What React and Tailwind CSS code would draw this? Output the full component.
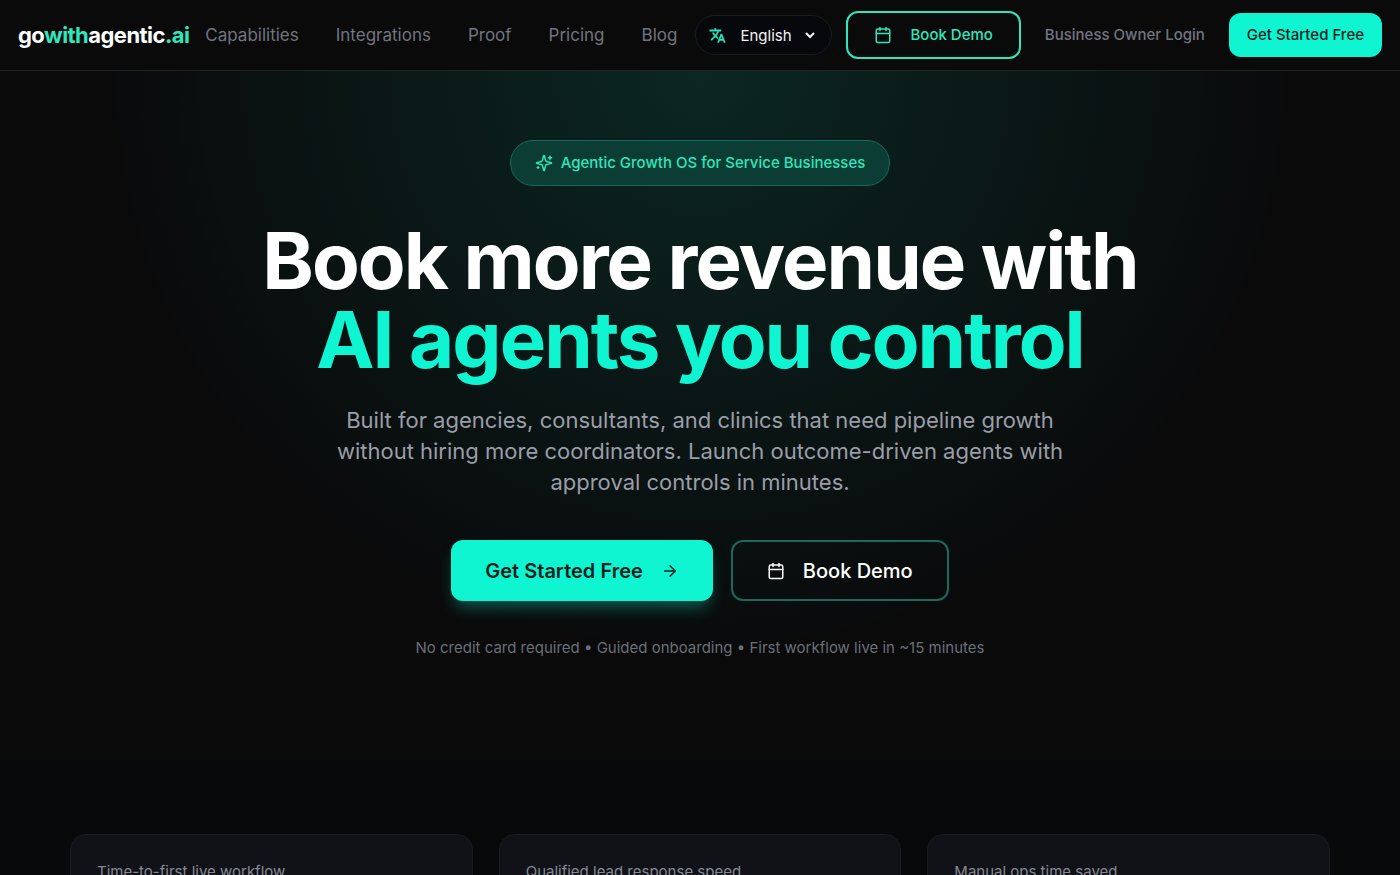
import { ArrowRight, Calendar } from "lucide-react";

const NAV_LINKS = ["Capabilities", "Integrations", "Proof", "Pricing", "Blog"];

const STATS = [
  "Time-to-first live workflow",
  "Qualified lead response speed",
  "Manual ops time saved",
];

function TranslateIcon({ className }) {
  return (
    <svg viewBox="0 0 24 24" fill="currentColor" aria-hidden="true" className={className}>
      <path
        stroke="currentColor"
        strokeWidth="0.6"
        d="m12.87 15.07-2.54-2.51.03-.03A17.52 17.52 0 0 0 14.07 6H17V4h-7V2H8v2H1v1.99h11.17C11.5 7.92 10.44 9.75 9 11.35 8.07 10.32 7.3 9.19 6.69 8h-2c.73 1.63 1.73 3.17 2.98 4.56l-5.09 5.02L4 19l5-5 3.11 3.11.76-2.04zM18.5 10h-2L12 22h2l1.12-3h4.75L21 22h2l-4.5-12zm-2.62 7 1.62-4.33L19.12 17h-3.24z"
      />
    </svg>
  );
}

function SparklesIcon({ className }) {
  return (
    <svg
      viewBox="0 0 24 24"
      fill="none"
      stroke="currentColor"
      strokeWidth="2"
      strokeLinecap="round"
      strokeLinejoin="round"
      aria-hidden="true"
      className={className}
    >
      <path d="M9.937 15.5A2 2 0 0 0 8.5 14.063l-6.135-1.582a.5.5 0 0 1 0-.962L8.5 9.936A2 2 0 0 0 9.937 8.5l1.582-6.135a.5.5 0 0 1 .963 0L14.063 8.5A2 2 0 0 0 15.5 9.937l6.135 1.581a.5.5 0 0 1 0 .964L15.5 14.063a2 2 0 0 0-1.437 1.437l-1.582 6.135a.5.5 0 0 1-.963 0z" />
      <path d="M20 3v4M22 5h-4M4 17v2M5 18H3" />
    </svg>
  );
}

function Navbar() {
  return (
    <header className="sticky top-0 z-40 border-b border-[#212326] bg-[#0a0a0b]">
      <div className="flex h-[70px] items-center justify-between px-[18px] whitespace-nowrap">
        <div className="flex items-center gap-4">
          <a href="#" className="text-[22px] font-bold tracking-tight text-white">
            go<span className="text-[#2fe6bd]">with</span>agentic
            <span className="text-[#2fe6bd]">.ai</span>
          </a>
          <nav className="flex items-center gap-[37px] text-[17px] leading-7 text-[#71757f]">
            {NAV_LINKS.map((link) => (
              <a key={link} href="#">
                {link}
              </a>
            ))}
          </nav>
        </div>
        <div className="flex items-center">
          <div className="flex h-10 items-center rounded-full border border-[#1b1c20] bg-[#07080b] px-[13px]">
            <TranslateIcon className="size-[17px] text-[#2fe6bd]" />
            <select
              aria-label="Language"
              className="ml-[10px] w-[82px] bg-transparent text-[15px] text-gray-100"
            >
              <option>English</option>
            </select>
          </div>
          <button className="ml-[14px] flex h-12 items-center gap-[18px] rounded-xl border-2 border-[#2fe6bd] px-[26px] text-[15px] font-medium text-[#2fe6bd]">
            <Calendar size={18} strokeWidth={2} />
            Book Demo
          </button>
          <a href="#" className="ml-6 text-[15px] font-medium text-[#71757f]">
            Business Owner Login
          </a>
          <button className="ml-6 h-11 rounded-xl bg-[#0ff5d2] px-[18px] text-[15px] font-medium text-[#0a1f1c]">
            Get Started Free
          </button>
        </div>
      </div>
    </header>
  );
}

function Hero() {
  return (
    <section className="flex flex-col items-center bg-[radial-gradient(ellipse_at_top,rgba(15,245,210,0.12),transparent_60%)] px-6 pt-[69px] pb-[100px] text-center">
      <div className="flex h-[46px] items-center gap-2 rounded-full border border-[#196a5a] bg-[#0b3d34] px-6 text-[15px] font-medium text-[#2fe6bd]">
        <SparklesIcon className="size-[18px]" />
        Agentic Growth OS for Service Businesses
      </div>
      <h1 className="mt-[35px] text-[78px] leading-[79px] font-bold tracking-tight text-white">
        Book more revenue with
        <span className="block text-[#0ff5d2]">AI agents you control</span>
      </h1>
      <p className="mt-[26px] max-w-[740px] text-[22px] leading-[31px] text-[#9a9ea8]">
        Built for agencies, consultants, and clinics that need pipeline growth without hiring more
        coordinators. Launch outcome-driven agents with approval controls in minutes.
      </p>
      <div className="mt-[42px] flex gap-[18px]">
        <button className="flex h-[61px] items-center gap-[18px] rounded-xl bg-[#0ff5d2] px-[34px] text-xl font-semibold text-[#0a1f1c] shadow-[0_10px_16px_-4px_rgba(15,245,210,0.35)]">
          Get Started Free
          <ArrowRight size={18} />
        </button>
        <button className="flex h-[61px] items-center gap-[18px] rounded-xl border-2 border-[#196a5d] px-[34px] text-xl font-medium text-white">
          <Calendar size={18} strokeWidth={2} />
          Book Demo
        </button>
      </div>
      <p className="mt-[35px] text-[15px] leading-6 text-[#6b6f79]">
        No credit card required • Guided onboarding • First workflow live in ~15 minutes
      </p>
    </section>
  );
}

function Stats() {
  return (
    <section className="bg-[#08090b] px-[70px] py-[74px]">
      <div className="grid grid-cols-3 gap-[26px]">
        {STATS.map((label) => (
          <div
            key={label}
            className="min-h-[150px] rounded-2xl border border-[#1b1c22] bg-[#111217] p-[26px] text-[15px] text-[#858995]"
          >
            {label}
          </div>
        ))}
      </div>
    </section>
  );
}

export default function App() {
  return (
    <div className="min-h-screen bg-[#0a0a0b] font-[Inter,sans-serif]">
      <Navbar />
      <main>
        <Hero />
        <Stats />
      </main>
    </div>
  );
}
